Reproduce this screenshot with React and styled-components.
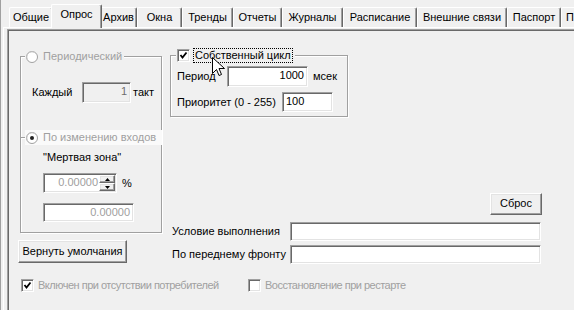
import React from 'react'
import styled, { createGlobalStyle, css } from 'styled-components'

const GlobalStyle = createGlobalStyle`
  html, body {
    margin: 0;
    padding: 0;
    background: #f0f0f0;
  }
  body {
    font-family: "Liberation Sans", Arial, sans-serif;
    font-size: 11px;
    line-height: 13px;
    color: #000;
  }
  * { box-sizing: border-box; }
`

const sunken = css`
  border: 1px solid;
  border-color: #a0a0a0 #fff #fff #a0a0a0;
  box-shadow: inset 1px 1px 0 #696969, inset -1px -1px 0 #e3e3e3;
`
const raised = css`
  border: 1px solid;
  border-color: #fff #696969 #696969 #fff;
  box-shadow: inset -1px -1px 0 #a0a0a0, inset 1px 1px 0 #e3e3e3;
`

const Window = styled.div`
  width: 574px;
  height: 310px;
  overflow: hidden;
  border-left: 1px solid #a0a0a0;
  padding-left: 2px;
  display: flex;
  flex-direction: column;
`
const TabStrip = styled.div`
  display: flex;
  align-items: flex-end;
  height: 27px;
  padding-left: 6px;
  flex: none;
`
const Tab = styled.div`
  flex: none;
  width: ${(p) => p.$w}px;
  height: 20px;
  display: flex;
  align-items: center;
  justify-content: ${(p) => (p.$edge ? 'flex-start' : 'center')};
  padding-left: ${(p) => (p.$edge ? '4px' : '0')};
  white-space: nowrap;
  overflow: hidden;
  border-top: 1px solid #fff;
  border-left: 1px solid #fff;
  border-right: 1px solid #696969;
  box-shadow: inset -1px 0 0 #a0a0a0;
  border-radius: 2px 2px 0 0;
  padding-bottom: 1px;
  ${(p) => p.$active && css`
    width: ${p.$w + 4}px;
    height: 24px;
    margin: 0 -2px -1px;
    padding-bottom: 4px;
    position: relative;
    z-index: 1;
    background: #f0f0f0;
  `}
`
const Page = styled.div`
  flex: 1;
  border-top: 1px solid #fff;
  border-left: 1px solid #fff;
  padding: 1px 0 0 3px;
  display: flex;
`
const Frame = styled.div`
  flex: 1;
  border-top: 1px solid #a0a0a0;
  border-left: 1px solid #a0a0a0;
  box-shadow: inset 1px 1px 0 #696969;
`
const Content = styled.div`
  display: grid;
  grid-template-columns: 144px 372px;
  column-gap: 8px;
  padding: 16px 0 0 10px;
`
const Column = styled.div`
  display: flex;
  flex-direction: column;
`
const Group = styled.div`
  position: relative;
  width: ${(p) => p.$w}px;
  height: ${(p) => p.$h}px;
  margin-top: ${(p) => p.$mt || 0}px;
  margin-left: ${(p) => p.$ml || 0}px;
  border: 1px solid #a0a0a0;
  border-bottom: ${(p) => (p.$open ? 'none' : '1px solid #a0a0a0')};
  box-shadow: inset 1px 1px 0 #fff, 1px 1px 0 #fff;
  padding: ${(p) => p.$pad};
  display: flex;
  flex-direction: column;
`
const Legend = styled.div`
  position: absolute;
  top: -8px;
  left: ${(p) => p.$left}px;
  right: ${(p) => (p.$wide ? '-1px' : 'auto')};
  height: 15px;
  display: flex;
  align-items: center;
  gap: ${(p) => p.$gap}px;
  padding: 0 2px 0 1px;
  background: ${(p) => p.$bg || '#f0f0f0'};
  color: ${(p) => (p.$disabled ? '#a0a0a0' : '#000')};
  white-space: nowrap;
`
const Row = styled.div`
  display: flex;
  align-items: center;
  margin-top: ${(p) => p.$mt || 0}px;
  padding-left: ${(p) => p.$pl || 0}px;
`
const Label = styled.span`
  flex: none;
  width: ${(p) => (p.$w ? `${p.$w}px` : 'auto')};
  margin-left: ${(p) => p.$ml || 0}px;
  color: ${(p) => (p.$disabled ? '#a0a0a0' : '#000')};
  white-space: nowrap;
`
const Edit = styled.div`
  ${sunken}
  flex: none;
  width: ${(p) => p.$w}px;
  height: ${(p) => p.$h || 21}px;
  margin-top: ${(p) => p.$mt || 0}px;
  background: ${(p) => (p.$disabled ? '#f0f0f0' : '#fff')};
  color: ${(p) => (p.$gray ? '#a0a0a0' : p.$disabled ? '#6d6d6d' : '#000')};
  text-align: ${(p) => (p.$right ? 'right' : 'left')};
  padding: 2px 3px 0 3px;
  white-space: nowrap;
`
const Button = styled.div`
  ${raised}
  flex: none;
  width: ${(p) => p.$w}px;
  height: ${(p) => p.$h}px;
  margin-top: ${(p) => p.$mt || 0}px;
  align-self: ${(p) => (p.$end ? 'flex-end' : 'flex-start')};
  display: flex;
  align-items: center;
  justify-content: center;
  padding-bottom: 1px;
  white-space: nowrap;
`
const Spin = styled.div`
  ${sunken}
  display: flex;
  width: 74px;
  height: 20px;
  background: #fff;
  padding: 1px;
`
const SpinValue = styled.div`
  flex: 1;
  text-align: right;
  color: #a0a0a0;
  padding: 1px 1px 0 0;
`
const SpinButtons = styled.div`
  width: 16px;
  display: flex;
  flex-direction: column;
`
const SpinHalf = styled.div`
  ${raised}
  flex: 1;
  background: #f0f0f0;
  display: flex;
  align-items: center;
  justify-content: center;
`
const Box = styled.span`
  ${sunken}
  flex: none;
  width: 13px;
  height: 13px;
  background: #fff;
  display: flex;
  align-items: center;
  justify-content: center;
`
const Focus = styled.span`
  border: 1px dotted #000;
  padding: 0 1px;
  line-height: 13px;
`
const Bottom = styled.div`
  grid-column: 1 / -1;
  display: flex;
  align-items: center;
  margin-top: 15px;
  padding-left: 3px;
`
const CheckItem = styled.div`
  flex: none;
  width: ${(p) => (p.$w ? `${p.$w}px` : 'auto')};
  display: flex;
  align-items: center;
  gap: 4px;
  color: #a0a0a0;
  letter-spacing: -0.5px;
`
const Cursor = styled.svg`
  position: absolute;
  left: 41px;
  top: 1px;
  z-index: 2;
`

const tabs = [
  ['Общие', 44],
  ['Опрос', 47],
  ['Архив', 37],
  ['Окна', 45],
  ['Тренды', 51],
  ['Отчеты', 49],
  ['Журналы', 61],
  ['Расписание', 74],
  ['Внешние связи', 90],
  ['Паспорт', 54],
  ['П', 40],
]

const Check = ({ on }) => (
  <Box>
    {on && (
      <svg width="9" height="9" viewBox="0 0 9 9">
        <polyline points="1.5,4 3.5,6.5 7.5,1.5" fill="none" stroke="#000" strokeWidth="1.8" />
      </svg>
    )}
  </Box>
)

const Radio = ({ on }) => (
  <svg width="12" height="12" viewBox="0 0 12 12">
    <circle cx="6" cy="6" r="5.5" fill="#fff" stroke="#a0a0a0" />
    <path d="M2.3 9.7 A5 5 0 0 1 9.7 2.3" fill="none" stroke="#c8c8c8" />
    {on && <circle cx="6" cy="6" r="2" fill="#222" />}
  </svg>
)

const Arrow = ({ up }) => (
  <svg width="5" height="3" viewBox="0 0 5 3">
    <polygon points={up ? '2.5,0 5,3 0,3' : '0,0 5,0 2.5,3'} fill="#000" />
  </svg>
)

export default function App() {
  return (
    <>
      <GlobalStyle />
      <Window>
        <TabStrip>
          {tabs.map(([name, w], i) => (
            <Tab key={name} $w={w} $active={name === 'Опрос'} $edge={i === tabs.length - 1}>
              {name}
            </Tab>
          ))}
        </TabStrip>
        <Page>
          <Frame>
            <Content>
              <Column>
                <Group $w={142} $h={81} $mt={10} $ml={2} $open $pad="25px 0 0 11px">
                  <Legend $left={4} $gap={5} $disabled>
                    <Radio />
                    Периодический
                  </Legend>
                  <Row>
                    <Label $w={50}>Каждый</Label>
                    <Edit $w={49} $h={21} $right $disabled>1</Edit>
                    <Label $ml={2}>такт</Label>
                  </Row>
                </Group>
                <Group $w={142} $h={96} $ml={2} $pad="13px 0 0 22px">
                  <Legend $left={4} $gap={5} $disabled $wide $bg="#fafafa">
                    <Radio on />
                    По изменению входов
                  </Legend>
                  <Label>"Мертвая зона"</Label>
                  <Row $mt={9}>
                    <Spin>
                      <SpinValue>0.00000</SpinValue>
                      <SpinButtons>
                        <SpinHalf><Arrow up /></SpinHalf>
                        <SpinHalf><Arrow /></SpinHalf>
                      </SpinButtons>
                    </Spin>
                    <Label $ml={5}>%</Label>
                  </Row>
                  <Edit $w={91} $h={19} $mt={10} $right $gray>0.00000</Edit>
                </Group>
                <Button $w={109} $h={23} $mt={7}>Вернуть умолчания</Button>
              </Column>
              <Column>
                <Group $w={178} $h={62} $mt={9} $pad="10px 0 0 6px">
                  <Legend $left={5} $gap={3}>
                    <Check on />
                    <Focus>Собственный цикл</Focus>
                  </Legend>
                  <Cursor width="13" height="20" viewBox="0 0 13 20">
                    <path d="M0.5 0.5 L0.5 16.5 L4.5 12.5 L7 18.5 L9.5 17.5 L7 11.5 L12.5 11.5 Z" fill="#fff" stroke="#000" />
                  </Cursor>
                  <Row>
                    <Label $w={50}>Период</Label>
                    <Edit $w={81} $h={21} $right>1000</Edit>
                    <Label $ml={5}>мсек</Label>
                  </Row>
                  <Row $mt={5}>
                    <Label $w={105}>Приоритет (0 - 255)</Label>
                    <Edit $w={51} $h={20}>100</Edit>
                  </Row>
                </Group>
                <Button $w={52} $h={22} $mt={76} $end>Сброс</Button>
                <Row $mt={7} $pl={2}>
                  <Label $w={118}>Условие выполнения</Label>
                  <Edit $w={251} $h={19} />
                </Row>
                <Row $mt={4} $pl={2}>
                  <Label $w={118}>По переднему фронту</Label>
                  <Edit $w={251} $h={19} />
                </Row>
              </Column>
              <Bottom>
                <CheckItem $w={227}>
                  <Check on />
                  Включен при отсутствии потребителей
                </CheckItem>
                <CheckItem>
                  <Check />
                  Восстановление при рестарте
                </CheckItem>
              </Bottom>
            </Content>
          </Frame>
        </Page>
      </Window>
    </>
  )
}
